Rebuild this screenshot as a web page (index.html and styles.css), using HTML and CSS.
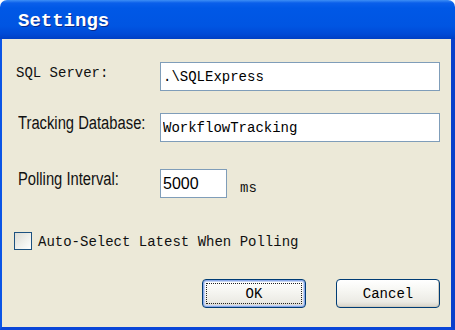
FILE: index.html
```html
<!DOCTYPE html>
<html lang="en">
<head>
    <meta charset="UTF-8">
    <meta name="viewport" content="width=device-width, initial-scale=1.0">
    <title>Settings</title>
    <link rel="stylesheet" href="styles.css">
</head>
<body>
    <div class="window">
        <div class="titlebar">
            <span class="title">Settings</span>
        </div>
        <div class="client">
            <div class="row row-sql">
                <label class="label mono" for="sqlServer">SQL Server:</label>
                <input class="field mono" type="text" id="sqlServer" value=".\SQLExpress">
            </div>
            <div class="row row-db">
                <label class="label sans" for="trackingDb"><span class="narrow">Tracking Database:</span></label>
                <input class="field mono" type="text" id="trackingDb" value="WorkflowTracking">
            </div>
            <div class="row row-poll">
                <label class="label sans" for="interval"><span class="narrow">Polling Interval:</span></label>
                <input class="field field-small digits" type="text" id="interval" value="5000">
                <span class="unit mono">ms</span>
            </div>
            <div class="check-row">
                <input class="check" type="checkbox" id="autoSelect">
                <label class="check-label mono" for="autoSelect">Auto-Select Latest When Polling</label>
            </div>
            <div class="buttons">
                <button class="btn btn-default mono">OK</button>
                <button class="btn mono">Cancel</button>
            </div>
        </div>
    </div>
</body>
</html>
```

FILE: styles.css
```css
body {
    margin: 0;
    background: #fff;
    font-family: "Liberation Sans", Arial, sans-serif;
}
.mono {
    font-family: "Liberation Mono", "Courier New", monospace;
    font-size: 14px;
}
.window {
    width: 455px;
    height: 330px;
    display: flex;
    flex-direction: column;
}
.titlebar {
    height: 39px;
    box-sizing: border-box;
    padding: 4px 0 0 18px;
    border-radius: 7px 7px 0 0;
    background: linear-gradient(to bottom, #3d8ef5 0, #0a5fea 3px, #0058e6 8px, #0055e2 26px, #004ad6 34px, #003fc4 39px);
}
.title {
    display: block;
    line-height: 35px;
    font-family: "Liberation Mono", "Courier New", monospace;
    font-size: 19px;
    font-weight: bold;
    color: #fff;
    text-shadow: 1px 1px 0 #0a2a8a;
}
.client {
    flex: 1;
    display: flex;
    flex-direction: column;
    background: #ece9d8;
    border-left: 2px solid #0b55e6;
    border-right: 4px solid #0a3fcb;
    border-bottom: 3px solid #0a46d8;
    padding: 0 11px 0 14px;
}
.row {
    display: flex;
    align-items: flex-start;
    height: 29px;
}
.row-sql {
    margin-top: 23px;
}
.row-db {
    margin-top: 22px;
}
.row-poll {
    margin-top: 27px;
}
.label {
    width: 144px;
    flex-shrink: 0;
    color: #111;
}
.label.mono {
    line-height: 18px;
    padding-top: 2px;
}
.label.sans {
    box-sizing: border-box;
    padding-left: 2px;
    font-size: 18px;
    line-height: 20px;
    white-space: nowrap;
}
/* the dialog font is a tall, narrow sans */
.narrow {
    display: inline-block;
    transform: scaleX(0.82);
    transform-origin: left center;
}
.field {
    width: 282px;
    height: 29px;
    box-sizing: border-box;
    margin: 0;
    padding: 0 2px;
    border: 1px solid #7f9db9;
    background: #fff;
    color: #000;
    outline: none;
}
.field-small {
    width: 67px;
}
.digits {
    font-family: "Liberation Sans", Arial, sans-serif;
    font-size: 16px;
}
.unit {
    margin-left: 13px;
    padding-top: 10px;
    line-height: 18px;
    color: #111;
}
.check-row {
    display: flex;
    align-items: center;
    margin-top: 34px;
    margin-left: -2px;
    height: 18px;
}
.check {
    appearance: none;
    -webkit-appearance: none;
    width: 18px;
    height: 18px;
    margin: 0;
    box-sizing: border-box;
    border: 1px solid #1c5180;
    background: linear-gradient(135deg, #dcdcd5 0%, #f2f2ee 60%, #fff 100%);
}
.check-label {
    margin-left: 6px;
    line-height: 18px;
    padding-top: 1px;
    color: #111;
}
.buttons {
    display: flex;
    justify-content: flex-end;
    gap: 30px;
    margin-top: 29px;
}
.btn {
    position: relative;
    width: 104px;
    height: 29px;
    padding: 0;
    border: 1px solid #003c74;
    border-radius: 4px;
    color: #000;
    background: linear-gradient(to bottom, #fff 0%, #f6f6f2 40%, #ecebe5 80%, #d8d4c8 100%);
    box-shadow: inset -1px -1px 0 #d0ccc0;
    cursor: pointer;
}
.btn-default {
    box-shadow: inset 0 0 0 1px #8aa8e8, inset 0 0 0 2px #c4d4f4;
}
.btn-default::after {
    content: "";
    position: absolute;
    top: 3px;
    left: 3px;
    right: 3px;
    bottom: 3px;
    border: 1px dotted #222;
}
```
